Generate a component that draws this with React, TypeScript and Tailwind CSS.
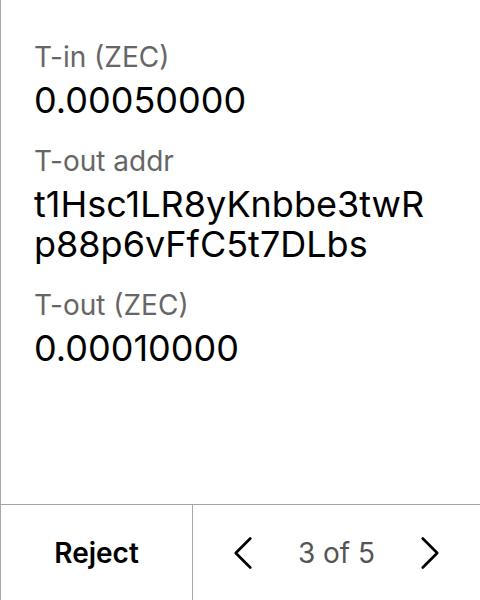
import { ChevronLeft, ChevronRight } from 'lucide-react';

const fields = [
  { label: 'T-in (ZEC)', value: '0.00050000' },
  { label: 'T-out addr', value: 't1Hsc1LR8yKnbbe3twRp88p6vFfC5t7DLbs' },
  { label: 'T-out (ZEC)', value: '0.00010000' },
];

export default function App() {
  return (
    <div
      className="h-[600px] w-[480px] flex flex-col bg-white border-l border-[#a6a6a6]"
      style={{ fontFamily: 'Inter, "Noto Sans", sans-serif' }}
    >
      <div className="flex-1 pl-[33px] pr-[34px] pt-[41px] flex flex-col gap-[25px]">
        {fields.map((f) => (
          <div key={f.label} className="flex flex-col gap-[7px]">
            <p className="text-[28px] leading-[32px] text-[#666666]">{f.label}</p>
            <p className="text-[36px] leading-[40px] text-black break-all">{f.value}</p>
          </div>
        ))}
      </div>

      {/* footer */}
      <div className="h-[96px] flex border-t border-[#a6a6a6]">
        <div className="w-[192px] flex items-center justify-center border-r border-[#a6a6a6]">
          <span className="text-[28px] font-semibold text-black">Reject</span>
        </div>
        <div className="flex-1 flex items-center justify-between px-[21px]">
          <ChevronLeft size={58} strokeWidth={1.1} color="#000" />
          <span className="text-[28px] text-[#555555]">3 of 5</span>
          <ChevronRight size={58} strokeWidth={1.1} color="#000" />
        </div>
      </div>
    </div>
  );
}
